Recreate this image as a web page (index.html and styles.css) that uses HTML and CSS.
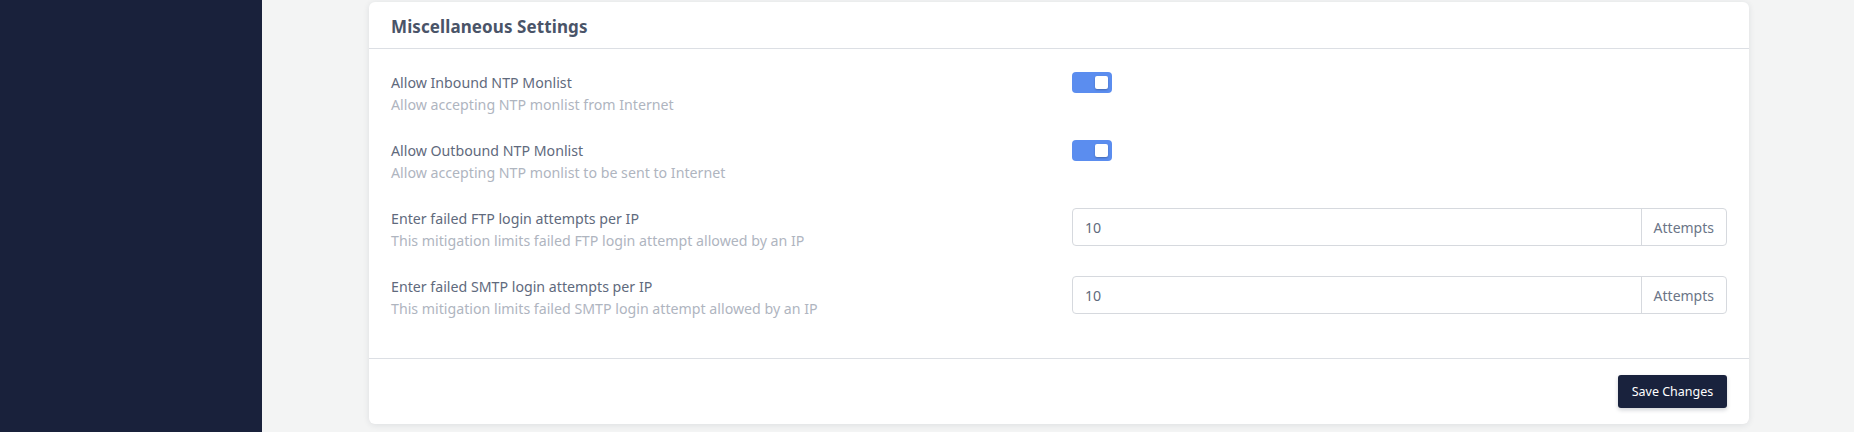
FILE: index.html
```html
<!DOCTYPE html>
<html>
<head>
<meta charset="utf-8">
<link rel="stylesheet" href="styles.css">
</head>
<body>
<div class="layout">
  <aside class="sidebar"></aside>
  <main class="main">
    <section class="card">
      <header class="card-header">
        <h2 class="card-title">Miscellaneous Settings</h2>
      </header>
      <div class="card-body">
        <div class="setting-row">
          <div class="setting-text">
            <div class="setting-label">Allow Inbound NTP Monlist</div>
            <div class="setting-desc">Allow accepting NTP monlist from Internet</div>
          </div>
          <div class="setting-control">
            <span class="toggle on"><span class="knob"></span></span>
          </div>
        </div>
        <div class="setting-row">
          <div class="setting-text">
            <div class="setting-label">Allow Outbound NTP Monlist</div>
            <div class="setting-desc">Allow accepting NTP monlist to be sent to Internet</div>
          </div>
          <div class="setting-control">
            <span class="toggle on"><span class="knob"></span></span>
          </div>
        </div>
        <div class="setting-row">
          <div class="setting-text">
            <div class="setting-label">Enter failed FTP login attempts per IP</div>
            <div class="setting-desc">This mitigation limits failed FTP login attempt allowed by an IP</div>
          </div>
          <div class="setting-control">
            <div class="input-group">
              <input class="input" type="text" value="10">
              <span class="addon">Attempts</span>
            </div>
          </div>
        </div>
        <div class="setting-row">
          <div class="setting-text">
            <div class="setting-label">Enter failed SMTP login attempts per IP</div>
            <div class="setting-desc">This mitigation limits failed SMTP login attempt allowed by an IP</div>
          </div>
          <div class="setting-control">
            <div class="input-group">
              <input class="input" type="text" value="10">
              <span class="addon">Attempts</span>
            </div>
          </div>
        </div>
      </div>
      <footer class="card-footer">
        <button class="btn-save">Save Changes</button>
      </footer>
    </section>
  </main>
</div>
</body>
</html>
```
FILE: styles.css
```css
* { box-sizing: border-box; }
html, body { margin: 0; padding: 0; }
body {
  width: 1854px;
  height: 432px;
  overflow: hidden;
  background: #f3f4f4;
  font-family: "Noto Sans", "Open Sans", sans-serif;
}
.layout {
  display: flex;
  height: 432px;
}
.sidebar {
  width: 262px;
  flex: 0 0 262px;
  background: #19213b;
}
.main {
  flex: 1;
  padding: 2px 105px 0 107px;
}
.card {
  background: #fff;
  border-radius: 6px;
  box-shadow: 0 1px 6px rgba(30, 40, 60, 0.10);
  width: 1380px;
}
.card-header {
  height: 47px;
  border-bottom: 1px solid #dcdfe4;
  padding: 0 22px;
  display: flex;
  align-items: center;
}
.card-title {
  margin: 0;
  font-size: 17px;
  font-weight: 700;
  color: #4a5468;
  letter-spacing: 0.1px;
  padding-top: 3px;
}
.card-body {
  padding: 23px 22px 38px;
  display: flex;
  flex-direction: column;
  gap: 24px;
}
.setting-row {
  display: grid;
  grid-template-columns: 1fr 1fr;
  column-gap: 26px;
  align-items: start;
}
.setting-label {
  font-size: 14.2px;
  line-height: 22px;
  color: #5f6a7d;
}
.setting-desc {
  font-size: 14.2px;
  line-height: 22px;
  color: #afb5bf;
}
.setting-control {
  display: flex;
}
.toggle {
  display: inline-block;
  position: relative;
  width: 40px;
  height: 21px;
  border-radius: 4px;
  background: #5b8def;
}
.toggle .knob {
  position: absolute;
  top: 4px;
  right: 4px;
  width: 13px;
  height: 13px;
  border-radius: 2px;
  background: #fff;
  box-shadow: 0 1px 2px rgba(0, 0, 0, 0.25);
}
.input-group {
  display: flex;
  width: 100%;
  height: 38px;
  border: 1px solid #d6d9de;
  border-radius: 4px;
}
.input {
  flex: 1;
  border: 0;
  outline: none;
  padding: 0 12px;
  font-family: inherit;
  font-size: 14.2px;
  color: #5f6a7d;
  background: transparent;
  border-radius: 4px 0 0 4px;
}
.addon {
  display: flex;
  align-items: center;
  padding: 0 12px;
  border-left: 1px solid #d6d9de;
  font-size: 14px;
  color: #6b7587;
}
.card-footer {
  border-top: 1px solid #dcdfe4;
  padding: 16px 22px 16px;
  display: flex;
  justify-content: flex-end;
}
.btn-save {
  height: 33px;
  width: 109px;
  border: 0;
  border-radius: 3px;
  background: #19223d;
  color: #fff;
  font-family: inherit;
  font-size: 12.5px;
  box-shadow: 0 2px 4px rgba(20, 30, 50, 0.2);
}
```
